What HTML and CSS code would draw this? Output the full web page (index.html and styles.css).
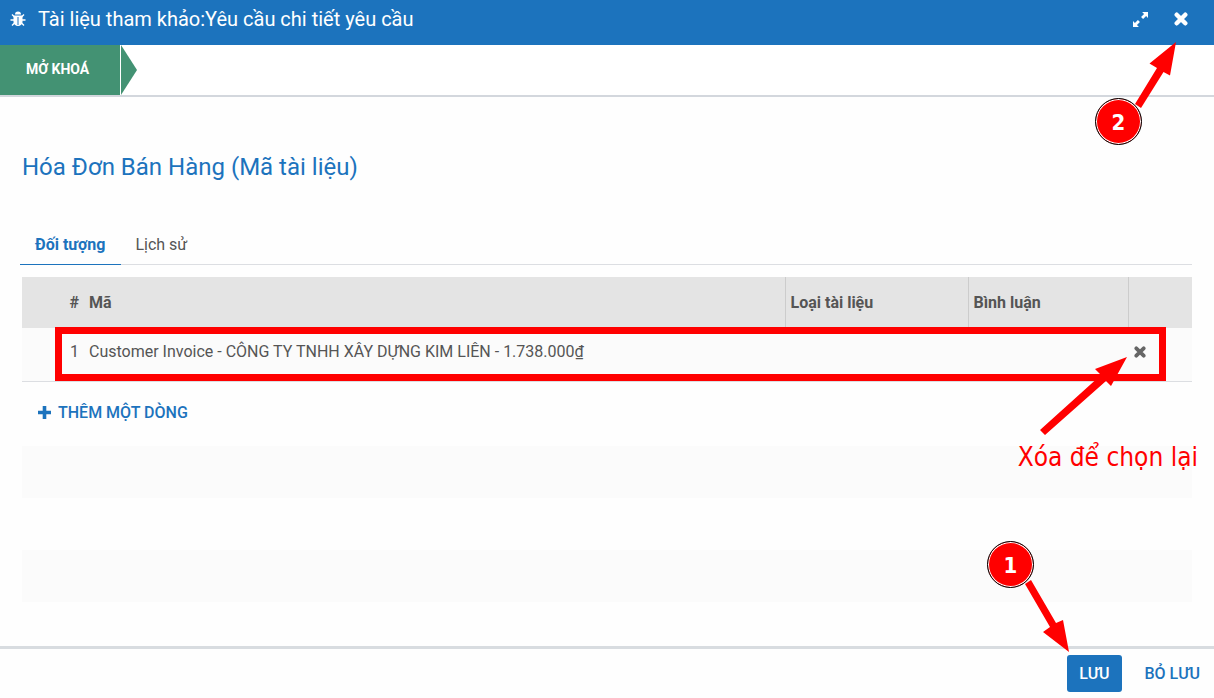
FILE: index.html
```
<!DOCTYPE html>
<html lang="vi">
<head>
<meta charset="utf-8">
<meta name="viewport" content="width=device-width, initial-scale=1">
<title>Tài liệu tham khảo</title>
<link rel="stylesheet" href="styles.css">
</head>
<body>
<div class="dialog">
  <header class="titlebar">
    <svg class="bug" viewBox="0 0 16 16" aria-hidden="true">
      <path d="M5 3.500a3 3 0 0 1 6 0z" fill="currentColor"/>
      <path d="M3.500 4.500h9v6.500a4.500 4 0 0 1-9 0z" fill="currentColor"/>
      <path d="M4.500 6L2 3.500M11.500 6L14 3.500M4 9H.500M12 9h3.500M4.500 12L2 14.500M11.500 12L14 14.500" stroke="currentColor" stroke-width="1.400" fill="none"/>
      <path d="M8 6v8" stroke="#1c73bd" stroke-width="1"/>
    </svg>
    <h1 class="title">Tài liệu tham khảo:Yêu cầu chi tiết yêu cầu</h1>
    <button class="icon-button" type="button" aria-label="Phóng to">
      <svg class="expand" viewBox="0 0 14 14" aria-hidden="true">
        <path d="M8.500 0H14v5.500l-1.800-1.800L9.400 6.500 7.500 4.600l2.800-2.800zM5.500 14H0V8.500l1.800 1.800L4.600 7.500l1.900 1.900-2.800 2.800z" fill="currentColor"/>
      </svg>
    </button>
    <button class="icon-button" type="button" aria-label="Đóng">
      <svg class="close" viewBox="0 0 14 14" aria-hidden="true"><path d="M2.700 2.700l8.600 8.600M11.300 2.700l-8.600 8.600" stroke="currentColor" stroke-width="4.400" stroke-linecap="round"/></svg>
    </button>
    <div class="step step-close">
      <svg class="step-arrow" viewBox="0 0 84 106" aria-hidden="true"><path d="M82 0L76 33.500 69.500 30 47 66 41 62 63 26 55.500 21.500z" fill="red"/></svg>
      <span class="badge">2</span>
    </div>
  </header>

  <div class="statusbar">
    <button class="unlock" type="button">MỞ KHOÁ</button>
    <svg class="chevron" viewBox="0 0 16 50" preserveAspectRatio="none" aria-hidden="true"><path d="M0 0l16 25L0 50z" fill="#439273"/></svg>
  </div>

  <main class="content">
    <h2 class="heading">Hóa Đơn Bán Hàng (Mã tài liệu)</h2>
    <nav class="tabs">
      <a class="tab tab-active" href="#objects">Đối tượng</a>
      <a class="tab" href="#history">Lịch sử</a>
    </nav>
    <div class="sheet" id="objects">
      <table class="grid">
        <colgroup><col class="c-num"><col><col class="c-type"><col class="c-note"><col class="c-del"></colgroup>
        <thead>
          <tr><th class="num">#</th><th>Mã</th><th class="ruled">Loại tài liệu</th><th class="ruled">Bình luận</th><th class="ruled"></th></tr>
        </thead>
        <tbody>
          <tr class="record">
            <td class="num">1</td>
            <td>Customer Invoice - CÔNG TY TNHH XÂY DỰNG KIM LIÊN - 1.738.000₫</td>
            <td></td><td></td>
            <td><button class="remove" type="button" aria-label="Xóa"><svg viewBox="0 0 14 14" aria-hidden="true"><path d="M2.700 2.700l8.600 8.600M11.300 2.700l-8.600 8.600" stroke="currentColor" stroke-width="4.400" stroke-linecap="round"/></svg></button></td>
          </tr>
          <tr class="add-row">
            <td colspan="5"><button class="add" type="button"><svg viewBox="0 0 13 13" aria-hidden="true"><path d="M6.500 1.500v10M1.500 6.500h10" stroke="currentColor" stroke-width="3.600" stroke-linecap="square"/></svg>THÊM MỘT DÒNG</button></td>
          </tr>
          <tr class="blank striped"><td colspan="5"></td></tr>
          <tr class="blank"><td colspan="5"></td></tr>
          <tr class="blank striped"><td colspan="5"></td></tr>
        </tbody>
      </table>
      <div class="highlight"></div>
      <svg class="note-arrow" viewBox="0 0 90 80" aria-hidden="true"><path d="M88 0L72 29 67 24 6 78 1 73 62 18 56 12z" fill="red"/></svg>
      <p class="note">Xóa để chọn lại</p>
    </div>
  </main>

  <footer class="footer">
    <button class="btn btn-primary" type="button">LƯU</button>
    <button class="btn" type="button">BỎ LƯU</button>
    <div class="step step-save">
      <svg class="step-arrow" viewBox="0 0 84 114" aria-hidden="true"><path d="M83 112L57 92l7-5-25-43 6-4 25 43 7-3z" fill="red"/></svg>
      <span class="badge">1</span>
    </div>
  </footer>
</div>
</body>
</html>
```
FILE: styles.css
```
* { box-sizing: border-box; }

body {
  margin: 0;
  background: #fefefe;
  color: #555;
  font: 16px/24px Roboto, "Liberation Sans", sans-serif;
}

button {
  padding: 0;
  border: 0;
  background: none;
  color: inherit;
  font: inherit;
  cursor: pointer;
}

svg { display: block; }

.dialog {
  display: flex;
  flex-direction: column;
  min-height: 100vh;
}

.titlebar {
  position: relative;
  display: flex;
  align-items: center;
  padding: 3px 26px 10px 10px;
  background: #1c73bd;
  color: #fff;
}

.bug {
  width: 16px;
  height: 16px;
  margin-right: 12px;
}

.title {
  flex: 1;
  margin: 0;
  font-size: 20px;
  line-height: 32px;
  font-weight: 400;
}

.icon-button { margin-left: 26px; }
.expand { width: 15px; height: 15px; }
.close { width: 14px; height: 14px; }

.statusbar {
  display: flex;
  gap: 1px;
  border-bottom: 2px solid #d3d7dd;
  background: #fff;
}

.unlock {
  height: 50px;
  padding: 0 31px 2px 26px;
  background: #439273;
  color: #fff;
  font-size: 14px;
  font-weight: 700;
}

.chevron { width: 16px; height: 50px; }

.content {
  flex: 1;
  padding: 52px 22px 42px;
}

.heading {
  margin: 0 0 48px;
  color: #1c73bd;
  font-size: 24px;
  line-height: 36px;
  font-weight: 400;
}

.tabs {
  display: flex;
  margin: 0 0 12px -2px;
  border-bottom: 1px solid #dcdee2;
}

.tab {
  margin-bottom: -1px;
  padding: 0 14px 7px;
  border-bottom: 1px solid transparent;
  color: #555;
  text-decoration: none;
}

.tab-active {
  padding: 0 16px 7px 15px;
  border-color: #1c73bd;
  color: #1c73bd;
  font-weight: 700;
}

.sheet { position: relative; }

.grid {
  width: 100%;
  border-collapse: collapse;
  table-layout: fixed;
}

.c-num { width: 62px; }
.c-type { width: 183px; }
.c-note { width: 160px; }
.c-del { width: 64px; }

.grid th {
  height: 51px;
  padding: 0 5px;
  background: #e4e4e4;
  font-weight: 700;
  text-align: left;
}

.grid .ruled { border-left: 1px solid #ccc; }
.grid .num { text-align: right; }

.grid td {
  padding: 12px 5px 0;
  vertical-align: top;
}

.record td {
  height: 53px;
  border-bottom: 1px solid #dcdee2;
}

.record, .striped { background: #fbfbfb; }

.grid .add-row td { height: 65px; padding: 19px 16px; }
.blank td { height: 52px; }

.remove {
  padding: 6px 1px;
  color: #666;
}

.remove svg { width: 12px; height: 12px; }

.add {
  display: flex;
  align-items: center;
  gap: 7px;
  color: #1c73bd;
  font-weight: 500;
}

.add svg { width: 13px; height: 13px; }

.footer {
  position: relative;
  display: flex;
  justify-content: flex-end;
  gap: 9px;
  padding: 6px 0;
  border-top: 3px solid #d8dce0;
}

.btn {
  height: 37px;
  padding: 0 14px;
  border-radius: 3px;
  color: #1c73bd;
  font-weight: 500;
}

.btn-primary {
  padding: 0 12px;
  background: #1c73bd;
  color: #fff;
}

/* Guide marks drawn over the dialog */
.highlight {
  position: absolute;
  top: 50px;
  left: 33px;
  right: 26px;
  height: 54px;
  border: 7px solid red;
  pointer-events: none;
}

.note-arrow {
  position: absolute;
  top: 80px;
  right: 63px;
  width: 90px;
  height: 80px;
  pointer-events: none;
}

.note {
  position: absolute;
  top: 164px;
  right: -6px;
  margin: 0;
  color: red;
  font: 26px/32px "DejaVu Sans Condensed", "DejaVu Sans", sans-serif;
  white-space: nowrap;
}

.step {
  position: absolute;
  z-index: 1;
  width: 84px;
  pointer-events: none;
}

.step-close { top: 42px; right: 36px; height: 106px; }
.step-save { bottom: 44px; right: 144px; height: 114px; }

.step-arrow { width: 100%; height: 100%; }

.badge {
  position: absolute;
  left: 1px;
  width: 47px;
  height: 47px;
  border: 1px solid #000;
  border-radius: 50%;
  background: red;
  box-shadow: inset 0 0 0 1px #fff;
  color: #fff;
  font: bold 22px/47px "DejaVu Sans Condensed", "DejaVu Sans", sans-serif;
  text-align: center;
}

.step-close .badge { bottom: 3px; }
.step-save .badge { top: 1px; }
```
